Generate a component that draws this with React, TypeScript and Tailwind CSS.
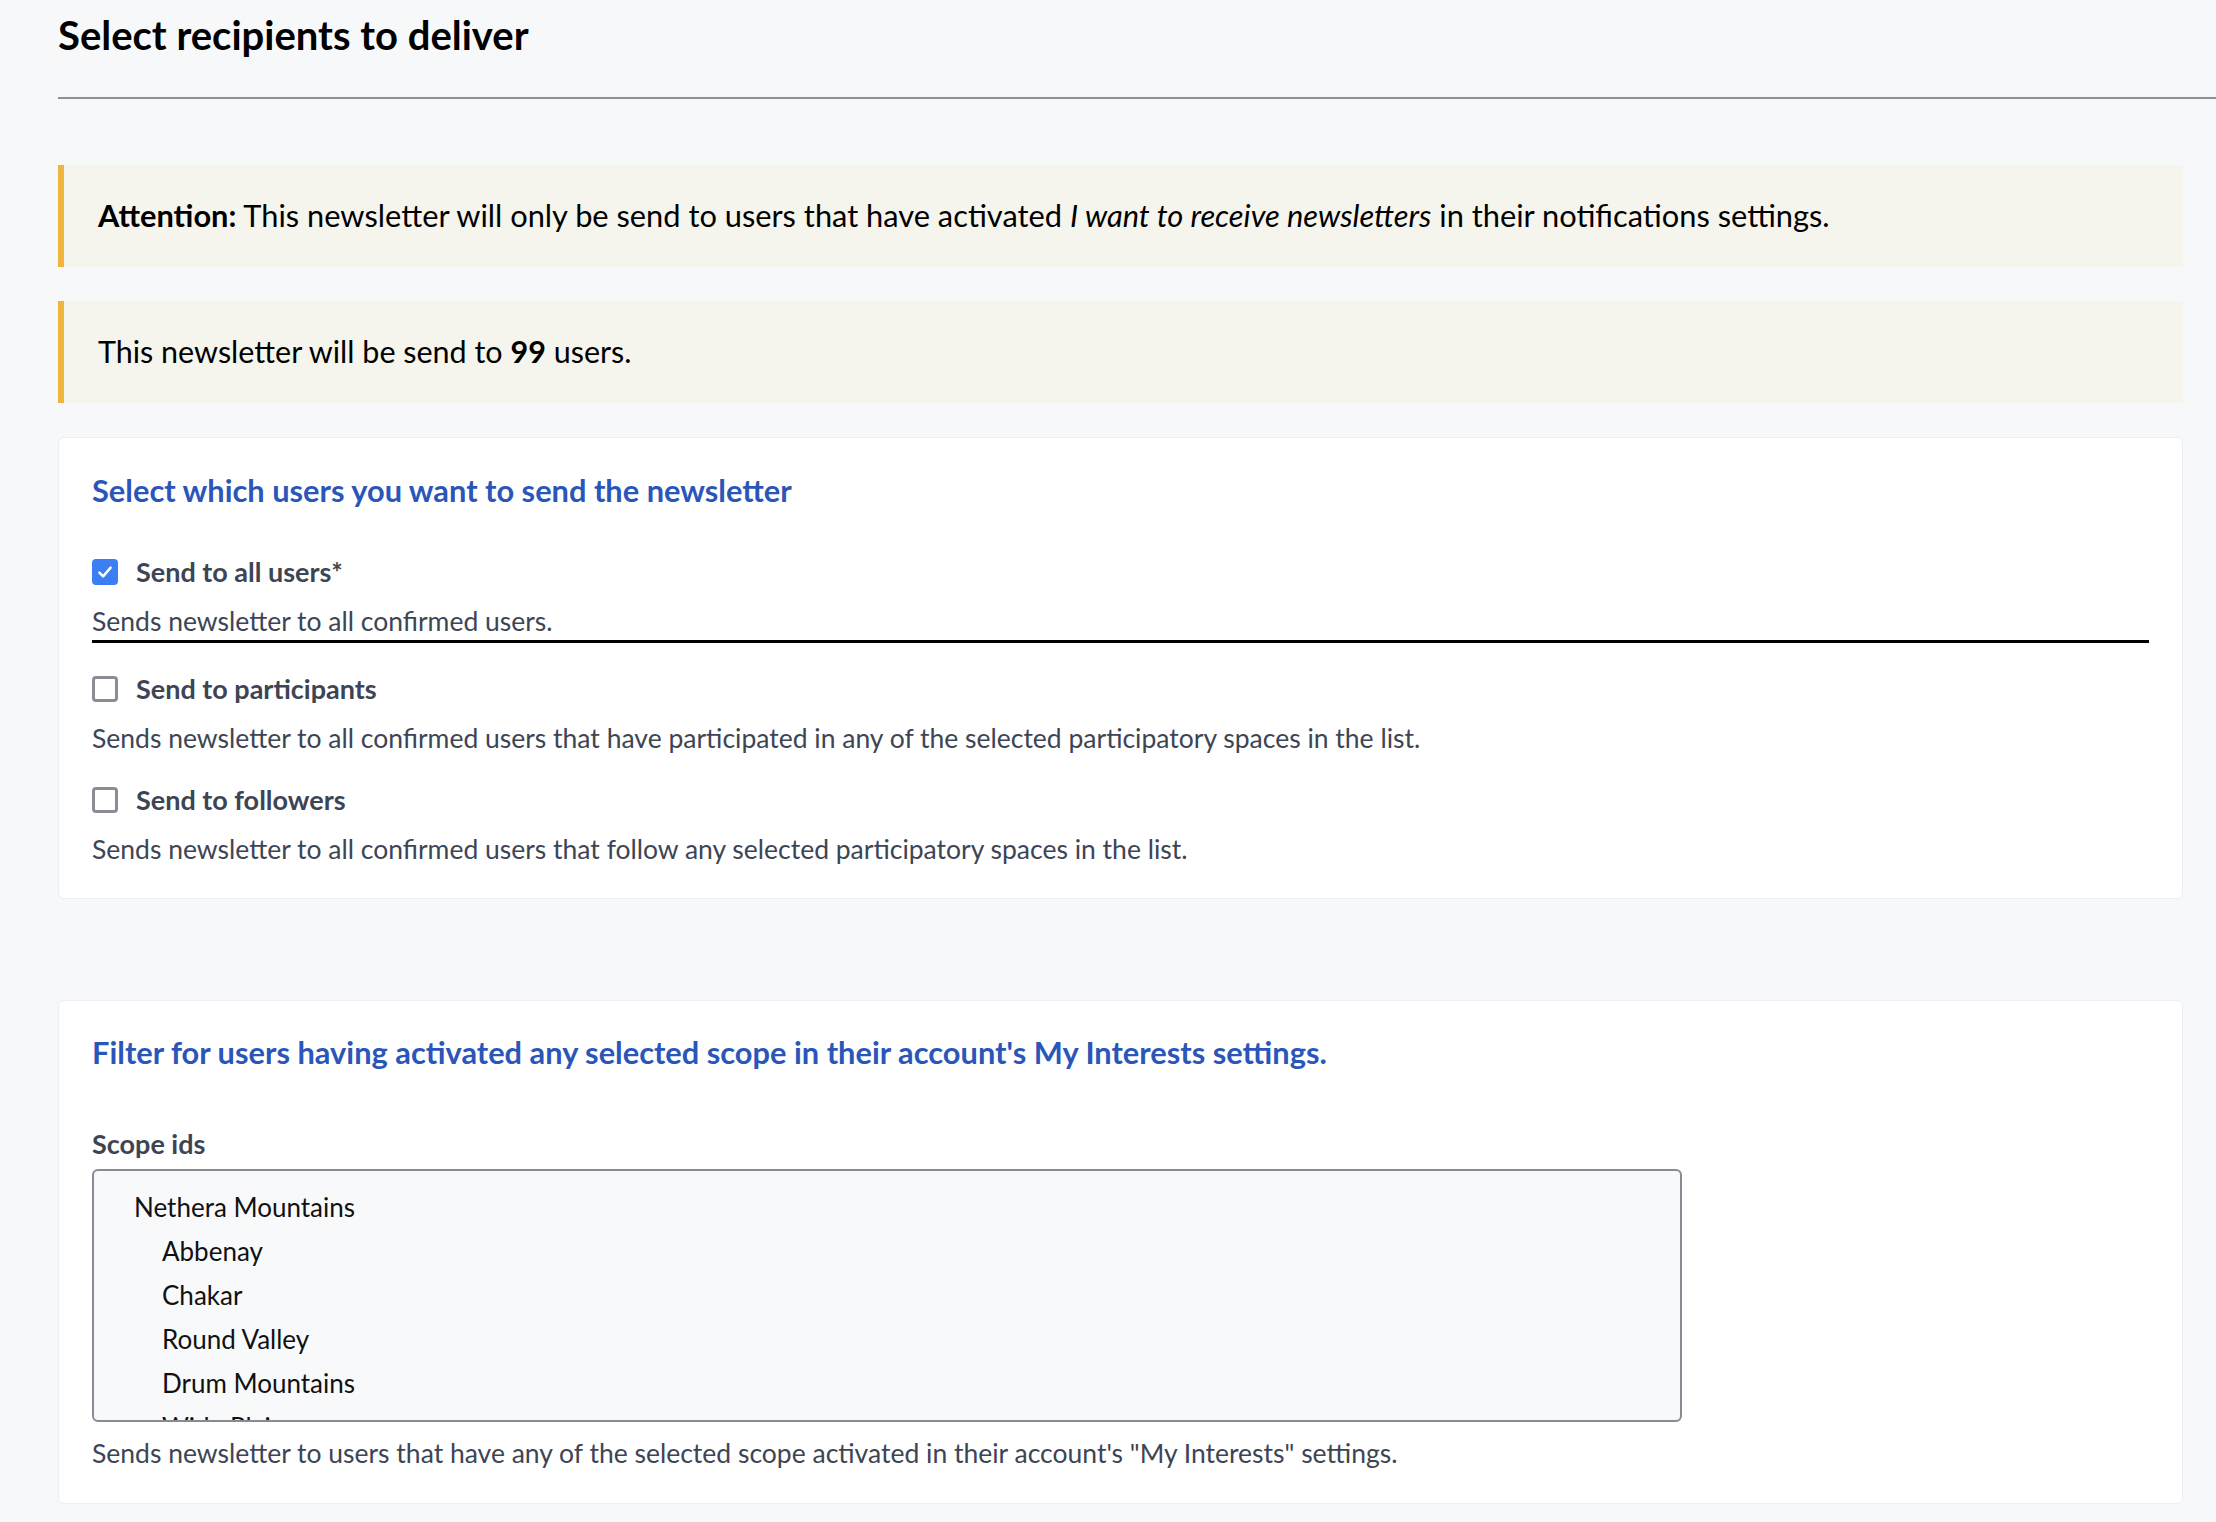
import React from "react";

const options = [
  { label: "Nethera Mountains", indent: false },
  { label: "Abbenay", indent: true },
  { label: "Chakar", indent: true },
  { label: "Round Valley", indent: true },
  { label: "Drum Mountains", indent: true },
  { label: "Wide Plains", indent: true },
];

function Check({ checked }: { checked?: boolean }) {
  if (checked) {
    return (
      <span className="flex h-[26px] w-[26px] shrink-0 items-center justify-center rounded-[4px] bg-[#3b7ff2]">
        <svg viewBox="0 0 16 16" className="h-[20px] w-[20px]" fill="none">
          <path d="M3.5 8.5l3 3 6-7" stroke="white" strokeWidth="2" strokeLinecap="round" strokeLinejoin="round" />
        </svg>
      </span>
    );
  }
  return <span className="h-[26px] w-[26px] shrink-0 rounded-[4px] border-[3px] border-[#8b8d96] bg-white" />;
}

function Option({ label, checked, help, underline }: { label: string; checked?: boolean; help: string; underline?: boolean }) {
  return (
    <div>
      <label className="flex h-[36px] items-center gap-[18px]">
        <Check checked={checked} />
        <span className="text-[27px] font-bold text-[#3d4555]">{label}</span>
      </label>
      <p
        className={`mt-[15px] h-[32px] text-[26.5px] leading-[32px] text-[#3d4555] ${
          underline ? "box-content border-b-[3px] border-black pb-[3px]" : ""
        }`}
      >
        {help}
      </p>
    </div>
  );
}

export default function App() {
  return (
    <div className="min-h-screen bg-[#f7f8fa] font-['Lato',sans-serif] text-black">
      <div className="pl-[58px]">
        <div className="border-b-2 border-[#8b8f97] pt-[13px] pb-[40px]">
          <h1 className="h-[44px] text-[40px] font-bold leading-[44px] text-black">Select recipients to deliver</h1>
        </div>

        <div className="pr-[33px] pt-[66px] pb-[20px]">
          <div className="flex h-[102px] items-center border-l-[6px] border-[#f1b43c] bg-[#f5f5ee] pl-[34px]">
            <p className="text-[30.8px]">
              <strong className="font-bold">Attention:</strong> This newsletter will only be send to users that have activated{" "}
              <em>I want to receive newsletters</em> in their notifications settings.
            </p>
          </div>

          <div className="mt-[34px] flex h-[102px] items-center border-l-[6px] border-[#f1b43c] bg-[#f5f5ee] pl-[34px]">
            <p className="text-[30.5px]">
              This newsletter will be send to <strong className="font-bold">99</strong> users.
            </p>
          </div>

          <section className="mt-[34px] rounded-[6px] border border-[#eceef1] bg-white px-[33px] pt-[35px] pb-[33px]">
            <h2 className="h-[36px] text-[30.8px] font-bold leading-[36px] text-[#2b56b9]">
              Select which users you want to send the newsletter
            </h2>
            <div className="mt-[45px] flex flex-col gap-[28px]">
              <Option label="Send to all users*" checked help="Sends newsletter to all confirmed users." underline />
              <Option
                label="Send to participants"
                help="Sends newsletter to all confirmed users that have participated in any of the selected participatory spaces in the list."
              />
              <Option
                label="Send to followers"
                help="Sends newsletter to all confirmed users that follow any selected participatory spaces in the list."
              />
            </div>
          </section>

          <section className="mt-[101px] rounded-[6px] border border-[#eceef1] bg-white px-[33px] pt-[34px] pb-[34px]">
            <h2 className="h-[36px] text-[30.8px] font-bold leading-[36px] text-[#2b56b9]">
              Filter for users having activated any selected scope in their account's My Interests settings.
            </h2>
            <label className="mt-[58px] block h-[30px] text-[27px] font-bold leading-[30px] text-[#3d4555]">Scope ids</label>
            <div className="mt-[10px] h-[253px] w-[1590px] overflow-hidden rounded-[6px] border-2 border-[#878b94] bg-[#f8f9fb] pt-[14px] pl-[40px]">
              {options.map((o) => (
                <div key={o.label} className={`h-[44px] text-[26px] leading-[44px] text-[#111] ${o.indent ? "pl-[28px]" : ""}`}>
                  {o.label}
                </div>
              ))}
            </div>
            <p className="mt-[15px] h-[32px] text-[26.5px] leading-[32px] text-[#3d4555]">
              Sends newsletter to users that have any of the selected scope activated in their account's "My Interests" settings.
            </p>
          </section>
        </div>
      </div>
    </div>
  );
}
